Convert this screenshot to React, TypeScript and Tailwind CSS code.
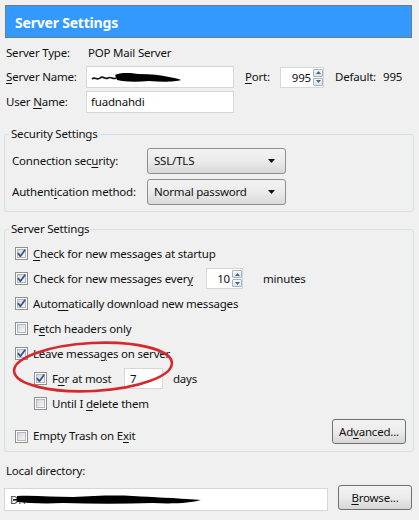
import React from 'react'

function U({ children }: { children: React.ReactNode }) {
  return <span className="underline decoration-1 underline-offset-[2px]">{children}</span>
}

function Check({ checked }: { checked?: boolean }) {
  return (
    <div className="relative h-[13px] w-[13px] shrink-0 border border-[#8e8f8f] bg-white p-[1px]">
      <div className="h-full w-full border border-[#b3b8bf] bg-gradient-to-br from-[#d4d7db] to-[#f7f7f7]" />
      {checked && (
        <svg viewBox="0 0 13 13" className="absolute left-[-1px] top-[-1px] h-[13px] w-[13px]">
          <path d="M3.3 6.6 L5.4 9.2 L9.8 3.2" fill="none" stroke="#34508f" strokeWidth="1.7" strokeLinecap="round" strokeLinejoin="round" />
        </svg>
      )}
    </div>
  )
}

function Spin({ value, w }: { value: string; w: string }) {
  return (
    <div className={`flex h-[21px] shrink-0 border border-[#d6d6d6] bg-white ${w}`}>
      <span className="flex-1 pr-[2px] text-right leading-[19px]">{value}</span>
      <div className="flex w-[10px] flex-col gap-[1px] py-[1px]">
        <div className="flex flex-1 items-center justify-center rounded-[1px] border border-[#a8b4c2] bg-gradient-to-b from-[#f4f7fa] to-[#dbe3ec]">
          <svg width="5" height="3" viewBox="0 0 5 3"><path d="M0 3 L2.5 0 L5 3 Z" fill="#4d6185" /></svg>
        </div>
        <div className="flex flex-1 items-center justify-center rounded-[1px] border border-[#a8b4c2] bg-gradient-to-b from-[#f4f7fa] to-[#dbe3ec]">
          <svg width="5" height="3" viewBox="0 0 5 3"><path d="M0 0 L2.5 3 L5 0 Z" fill="#4d6185" /></svg>
        </div>
      </div>
    </div>
  )
}

function Select({ value }: { value: string }) {
  return (
    <div className="flex h-[26px] w-[139px] items-center justify-between rounded-[3px] border border-[#8e8f8f] bg-gradient-to-b from-[#f3f3f3] via-[#ebebeb] to-[#d9d9d9] pl-[6px] pr-[10px]">
      <span>{value}</span>
      <svg width="7" height="4" viewBox="0 0 7 4"><path d="M0 0 L7 0 L3.5 4 Z" fill="#111" /></svg>
    </div>
  )
}

function Btn({ children, cls }: { children: React.ReactNode; cls: string }) {
  return (
    <div className={`flex h-[25px] w-[74px] items-center justify-center rounded-[3px] border border-[#707070] bg-gradient-to-b from-[#f3f3f3] via-[#ebebeb] to-[#d6d6d6] ${cls}`}>
      {children}
    </div>
  )
}

function Row({ checked, indent, children }: { checked?: boolean; indent?: boolean; children: React.ReactNode }) {
  return (
    <div className={`flex h-[25px] items-center ${indent ? 'pl-[19px]' : ''}`}>
      <Check checked={checked} />
      <span className="ml-[5px] flex items-center">{children}</span>
    </div>
  )
}

export default function App() {
  return (
    <div className="relative h-[520px] w-[419px] overflow-hidden bg-[#f0f0f0] font-['Noto_Sans',sans-serif] text-[11.5px] leading-[16px] tracking-[-0.2px] text-[#111]">
      <div className="ml-[5px] mt-[5px] flex h-[33px] w-[407px] items-center border border-[#6f7c88] bg-[#3399ff] pl-[9px] pt-[2px]">
        <span className="text-[14px] font-bold tracking-[-0.2px] text-white">Server Settings</span>
      </div>

      <div className="pl-[6px]">
        <div className="mt-[4px] flex h-[22px] items-center">
          <span className="w-[80px]">Server Type:</span>
          <span className="pl-[2px]">POP Mail Server</span>
        </div>
        <div className="mt-[2px] flex h-[22px] items-center">
          <span className="w-[80px]"><U>S</U>erver Name:</span>
          <div className="flex h-[22px] w-[148px] items-center border border-[#d6d6d6] bg-white pl-[4px]">
            <svg width="92" height="14" viewBox="0 0 92 14">
              <path d="M1 9 C4 6 6 11 9 8 C12 5 14 10 17 8 C20 6 22 10 25 8" fill="none" stroke="#111" strokeWidth="1.6" />
              <path d="M24 5 C30 2 40 3 48 4 C60 4 70 5 78 7 C84 8 88 9 90 10 C84 12 70 12 58 11 C46 12 34 12 26 10 Z" fill="#000" />
            </svg>
          </div>
          <span className="ml-[11px] w-[35px]"><U>P</U>ort:</span>
          <Spin value="995" w="w-[44px]" />
          <span className="ml-[11px] w-[48px]">Default:</span>
          <span>995</span>
        </div>
        <div className="mt-[3px] flex h-[22px] items-center">
          <span className="w-[80px]">User <U>N</U>ame:</span>
          <div className="flex h-[22px] w-[148px] items-center border border-[#d6d6d6] bg-white pl-[4px]">fuadnahdi</div>
        </div>
      </div>

      <fieldset className="ml-[4px] mt-[13px] w-[410px] rounded-[3px] border border-[#d5dfe5] px-[7px] pb-[6px]">
        <legend className="ml-[-3px] px-[2px]">Security Settings</legend>
        <div className="mt-[6px] flex h-[26px] items-center">
          <span className="w-[135px]">Connection sec<U>u</U>rity:</span>
          <Select value="SSL/TLS" />
        </div>
        <div className="mt-[5px] flex h-[26px] items-center">
          <span className="w-[135px]">Authent<U>i</U>cation method:</span>
          <Select value="Normal password" />
        </div>
      </fieldset>

      <fieldset className="ml-[4px] mt-[9px] w-[410px] rounded-[3px] border border-[#d5dfe5] pb-[7px] pl-[10px] pr-[7px]">
        <legend className="ml-[-6px] px-[2px]">Server Settings</legend>
        <div className="mt-[4px]">
          <Row checked><span><U>C</U>heck for new messages at startup</span></Row>
          <Row checked>
            <span className="w-[173px]">Check for new messages ever<U>y</U></span>
            <Spin value="10" w="w-[37px]" />
            <span className="ml-[20px]">minutes</span>
          </Row>
          <Row checked><span>Auto<U>m</U>atically download new messages</span></Row>
          <Row><span>F<U>e</U>tch headers only</span></Row>
          <Row checked><span>Leave messa<U>g</U>es on server</span></Row>
          <Row checked indent>
            <span className="w-[72px]">F<U>o</U>r at most</span>
            <div className="flex h-[21px] w-[39px] items-center border border-[#d6d6d6] bg-white pl-[5px]">7</div>
            <span className="ml-[10px]">days</span>
          </Row>
          <Row indent><span>Until I <U>d</U>elete them</span></Row>
          <div className="mt-[3px] flex h-[25px] items-start justify-between">
            <div className="mt-[9px] flex h-[16px] items-center">
              <Check />
              <span className="ml-[5px]">Empty Trash on E<U>x</U>it</span>
            </div>
            <Btn cls="">Ad<U>v</U>anced...</Btn>
          </div>
        </div>
      </fieldset>

      <div className="mt-[11px] pl-[6px]">Local directory:</div>
      <div className="mt-[6px] flex items-start pl-[4px]">
        <div className="mt-[3px] flex h-[23px] w-[324px] items-center border border-[#d6d6d6] bg-white pl-[5px]">
          <span className="text-[#444]">D:\</span>
          <svg width="192" height="14" viewBox="0 0 192 14" className="ml-[-12px]">
            <path d="M0 7 L14 6" stroke="#000" strokeWidth="1.5" />
            <path d="M4 3 C20 2 40 4 60 4 C80 3 100 2 120 3 C140 4 160 5 188 7 C178 10 160 11 140 10 C110 11 80 11 50 10 C30 11 15 10 4 9 Z" fill="#000" />
          </svg>
        </div>
        <Btn cls="ml-[10px]"><U>B</U>rowse...</Btn>
      </div>

      <svg className="pointer-events-none absolute left-0 top-0" width="419" height="520" viewBox="0 0 419 520">
        <ellipse cx="93" cy="367" rx="79" ry="24" transform="rotate(-3 93 367)" fill="none" stroke="#d42a2f" strokeWidth="2.6" />
      </svg>
    </div>
  )
}
